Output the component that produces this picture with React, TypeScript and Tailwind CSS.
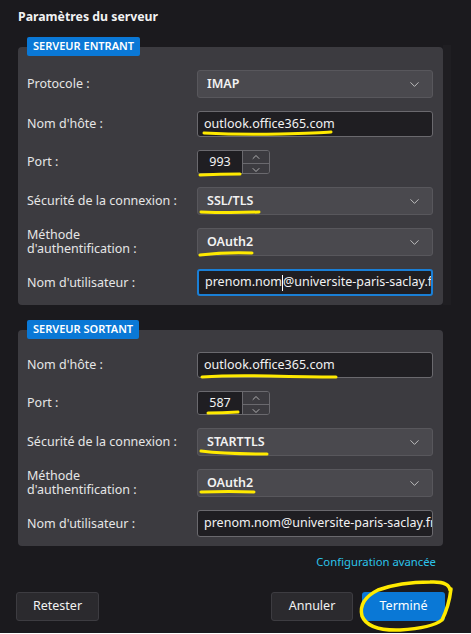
import { ChevronDown, ChevronUp } from 'lucide-react';

type Row =
  | { kind: 'select'; label: string[]; value: string }
  | { kind: 'input'; label: string[]; value: string; focused?: boolean; caret?: number; h?: string }
  | { kind: 'port'; label: string[]; value: string };

const incoming: Row[] = [
  { kind: 'select', label: ['Protocole :'], value: 'IMAP' },
  { kind: 'input', label: ["Nom d'hôte :"], value: 'outlook.office365.com' },
  { kind: 'port', label: ['Port :'], value: '993' },
  { kind: 'select', label: ['Sécurité de la connexion :'], value: 'SSL/TLS' },
  { kind: 'select', label: ['Méthode', "d'authentification :"], value: 'OAuth2' },
  { kind: 'input', label: ["Nom d'utilisateur :"], value: 'prenom.nom@universite-paris-saclay.fr', focused: true, caret: 10, h: 'h-[27px]' },
];

const outgoing: Row[] = [
  { kind: 'input', label: ["Nom d'hôte :"], value: 'outlook.office365.com' },
  { kind: 'port', label: ['Port :'], value: '587' },
  { kind: 'select', label: ['Sécurité de la connexion :'], value: 'STARTTLS' },
  { kind: 'select', label: ['Méthode', "d'authentification :"], value: 'OAuth2' },
  { kind: 'input', label: ["Nom d'utilisateur :"], value: 'prenom.nom@universite-paris-saclay.fr', h: 'h-[27px]' },
];

function Field({ row }: { row: Row }) {
  if (row.kind === 'select') {
    return (
      <div className="flex h-[28px] w-[236px] items-center justify-between rounded-[3px] border border-[#58575c] bg-[#4a494e] pl-[9px] pr-[10px]">
        <span className="text-[12.5px] font-semibold text-[#f2f2f2]">{row.value}</span>
        <ChevronDown size={15} strokeWidth={1.3} className="text-[#d8d8d8]" />
      </div>
    );
  }
  if (row.kind === 'port') {
    return (
      <div className="flex h-[24px] w-[73px] overflow-hidden rounded-[3px] border border-[#6a696e]">
        <div className="flex w-[44px] items-center justify-center bg-[#1f1e22] text-[12.5px] text-[#f2f2f2]">{row.value}</div>
        <div className="flex flex-1 flex-col border-l border-[#6a696e] bg-[#3c3b40]">
          <div className="flex flex-1 items-center justify-center border-b border-[#6a696e]">
            <ChevronUp size={12} strokeWidth={1.4} className="text-[#e0e0e0]" />
          </div>
          <div className="flex flex-1 items-center justify-center">
            <ChevronDown size={12} strokeWidth={1.4} className="text-[#e0e0e0]" />
          </div>
        </div>
      </div>
    );
  }
  const caret = row.caret;
  return (
    <div
      className={`flex ${row.h ?? 'h-[26px]'} w-[236px] items-center overflow-hidden whitespace-nowrap rounded-[3px] bg-[#1f1e22] pl-[6px] text-[12.5px] text-[#f2f2f2] ${
        row.focused ? 'border-2 border-[#1a7fd6] pl-[5px]' : 'border border-[#6a696e]'
      }`}
    >
      {caret !== undefined ? (
        <>
          <span>{row.value.slice(0, caret)}</span>
          <span className="h-[16px] w-px shrink-0 bg-white" />
          <span>{row.value.slice(caret)}</span>
        </>
      ) : (
        row.value
      )}
    </div>
  );
}

function Section({ title, rows, pt }: { title: string; rows: Row[]; pt: string }) {
  return (
    <div className="flex flex-col">
      <div className="relative z-10 ml-[9px] flex h-[19px] w-fit items-center rounded-[2px] bg-[#0a78d6] px-[6px] text-[11px] font-semibold text-white">
        {title}
      </div>
      <div className={`-mt-[9px] flex flex-col gap-[13px] rounded-[4px] bg-[#3c3b40] pb-[9px] pl-[9px] pr-[10px] ${pt}`}>
        {rows.map((row, i) => (
          <div key={i} className="flex items-center">
            <p className="w-[170px] text-[12.5px] leading-[14px] text-[#e6e6e6]">
              {row.label[0]}
              {row.label[1] && (
                <>
                  <br />
                  {row.label[1]}
                </>
              )}
            </p>
            <Field row={row} />
          </div>
        ))}
      </div>
    </div>
  );
}

export default function App() {
  return (
    <div className="relative h-[634px] w-[471px] overflow-hidden bg-[#1b1a1e] font-['Noto_Sans','Liberation_Sans',sans-serif]">
      <div className="flex">
        <div className="flex w-[443px] flex-col pl-[18px] pt-[7px]">
          <h1 className="h-[20px] text-[12.3px] font-bold leading-[20px] text-[#f2f2f2]">Paramètres du serveur</h1>
          <div className="mt-[10px]">
            <Section title="SERVEUR ENTRANT" rows={incoming} pt="pt-[23px]" />
          </div>
          <div className="mt-[15px]">
            <Section title="SERVEUR SORTANT" rows={outgoing} pt="pt-[22px]" />
          </div>
          <div className="mt-[8px] pr-[7px] text-right text-[11.3px] leading-[16px] text-[#2cc3ea]">Configuration avancée</div>
        </div>
        <div className="mt-[45px] h-[260px] w-[8px] bg-[#1f1e22]" />
      </div>

      <div className="mt-[22px] flex items-center justify-between pl-[16px] pr-[26px]">
        <button className="h-[29px] w-[83px] rounded-[3px] border border-[#3d3c41] bg-[#2b2a2e] text-[12.5px] text-[#f2f2f2]">Retester</button>
        <div className="flex gap-[9px]">
          <button className="h-[29px] w-[82px] rounded-[3px] border border-[#3d3c41] bg-[#2b2a2e] text-[12.5px] text-[#f2f2f2]">Annuler</button>
          <button className="h-[29px] w-[83px] rounded-[3px] bg-[#0a78d6] text-[12.5px] text-white">Terminé</button>
        </div>
      </div>

      {/* marker strokes drawn over the form */}
      <svg className="pointer-events-none absolute left-0 top-0" width="471" height="634" viewBox="0 0 471 634" fill="none" stroke="#ffea00" strokeWidth="3" strokeLinecap="round">
        <path d="M204 133 Q240 135 280 134 T331 132" />
        <path d="M200 175 Q220 174 240 174" />
        <path d="M201 212 Q230 213 259 212" />
        <path d="M200 255 Q225 252 252 253" />
        <path d="M202 377 Q230 375 270 376 T336 377" />
        <path d="M208 413 Q222 413 238 412" />
        <path d="M201 451 Q225 454 267 454" />
        <path d="M201 492 Q230 491 254 492" />
        <path strokeWidth="3.5" d="M450 590 Q449 581 430 582 Q400 582 378 590 Q358 600 362 616 Q368 631 400 630 Q432 628 442 620 Q449 606 451 589" />
      </svg>
      <div className="absolute bottom-0 left-0 h-px w-full bg-white" />
    </div>
  );
}
